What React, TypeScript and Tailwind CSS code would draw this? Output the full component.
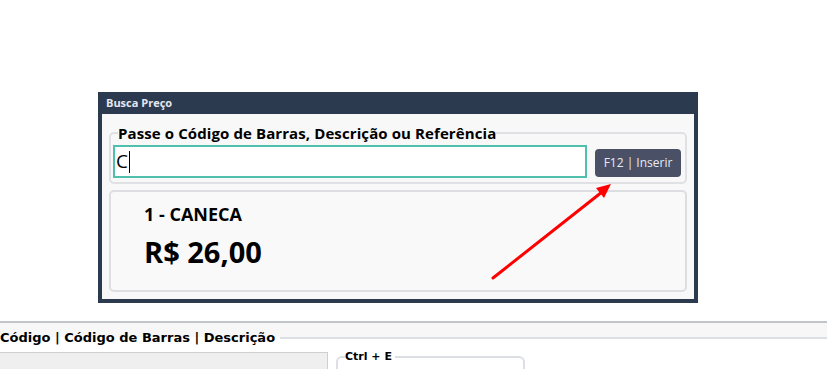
const ui = { fontFamily: '"Open Sans", "Noto Sans", sans-serif' };
const legacy = { fontFamily: '"DejaVu Sans", Verdana, sans-serif' };

const RedArrow = () => (
  <svg className="pointer-events-none absolute left-0 top-0" width="827" height="369">
    <line x1="493" y1="278" x2="602" y2="192" stroke="#ff0000" strokeWidth="3" strokeLinecap="round" />
    <polygon points="611,184 596,188 604,198" fill="#ff0000" />
  </svg>
);

const BuscaPreco = () => {
  return (
    <div className="ml-[98px] flex h-[211px] w-[600px] flex-col bg-[#2c3a50] px-[4px] pb-[4px]" style={ui}>
      <div className="h-[22px] pl-[4px] text-[11px] font-bold leading-[22px] text-[#e3e8f0]">Busca Preço</div>
      <div className="flex-1 bg-[#f8f8f8] px-[7px] pt-[9px]">
        <fieldset className="rounded-[5px] border-2 border-[#dfe1e4] px-[2px] pb-[4px]">
          <legend className="ml-[5px] px-0 text-[15px] font-bold leading-[20px] tracking-[0.1px] text-black">
            Passe o Código de Barras, Descrição ou Referência
          </legend>
          <div className="mt-[2px] flex items-center gap-[8px] pr-[2px]">
            <div className="flex h-[33px] flex-1 items-center border-2 border-[#4fc0ae] bg-white pl-[1px] text-[19px] leading-none text-black">
              C<span className="ml-px h-[22px] w-px bg-black" />
            </div>
            <button className="mt-[2px] h-[28px] w-[86px] rounded-[4px] bg-[#4a5066] text-[12px] text-[#e8eaf0]">
              F12 | Inserir
            </button>
          </div>
        </fieldset>
        <div className="mt-[6px] h-[102px] rounded-[5px] border-2 border-[#dcdee1] bg-[#f9f9f9] pl-[33px] pt-[10px] text-black">
          <div className="text-[18px] font-bold leading-[24px]">1 - CANECA</div>
          <div className="mt-[8px] text-[29px] font-bold leading-[36px]">R$ 26,00</div>
        </div>
      </div>
    </div>
  );
};

const Lista = () => {
  return (
    <div className="mt-[18px] border-t-2 border-[#c1c5c9] bg-[#f7f7f7] pt-[7px]" style={legacy}>
      <fieldset className="border-0 border-t-2 border-[#dcdfe3] bg-white">
        <legend className="pr-[5px] text-[13px] font-bold leading-[16px] text-black">
          Código | Código de Barras | Descrição
        </legend>
        <div className="mt-[4px] flex items-start gap-[8px]">
          <div className="mt-[2px] h-[40px] w-[328px] border-r border-t border-[#cfcfcf] bg-[#efefef]" />
          <fieldset className="h-[40px] w-[189px] rounded-t-[6px] border-2 border-b-0 border-[#dcdfe3]">
            <legend className="ml-[7px] pr-[3px] text-[11px] font-bold leading-[14px] text-black">Ctrl + E</legend>
          </fieldset>
        </div>
      </fieldset>
    </div>
  );
};

const App = () => {
  return (
    <div className="relative h-[369px] w-[827px] overflow-hidden bg-white pt-[92px]">
      <BuscaPreco />
      <Lista />
      <RedArrow />
    </div>
  );
};

export default App;
